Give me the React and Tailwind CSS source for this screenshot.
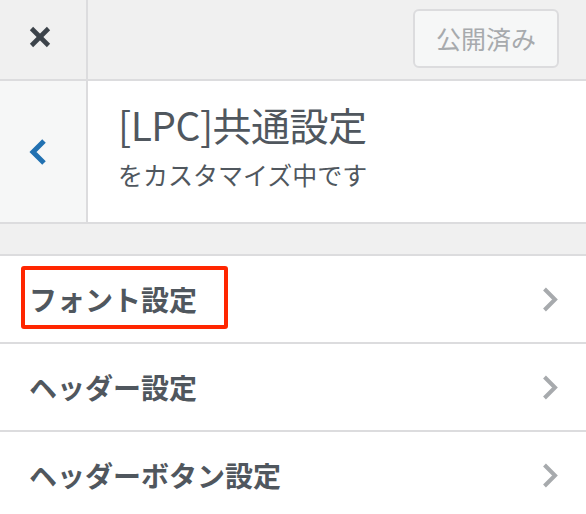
import React from 'react'

const font = { fontFamily: '"Noto Sans CJK JP", "Noto Sans", sans-serif' }

const ChevronRight = () => (
  <svg width="18" height="27" viewBox="0 0 18 27" fill="none">
    <polyline points="3.5,3 14,13.5 3.5,24" stroke="#a7aaad" strokeWidth="4" strokeLinejoin="miter" />
  </svg>
)

const sections = ['フォント設定', 'ヘッダー設定', 'ヘッダーボタン設定']

const App = () => {
  return (
    <div className="w-[586px] h-[514px] overflow-hidden bg-white text-[#50575e]" style={font}>
      {/* Top bar */}
      <div className="flex h-[81px] bg-[#f0f0f0] border-b-2 border-[#dcdcde]">
        <div className="w-[88px] border-r-2 border-[#dcdcde] pl-[28px] pt-[25px]">
          <svg width="24" height="24" viewBox="0 0 24 24" fill="none">
            <line x1="3.5" y1="3.5" x2="20.5" y2="20.5" stroke="#3c434a" strokeWidth="4.6" />
            <line x1="20.5" y1="3.5" x2="3.5" y2="20.5" stroke="#3c434a" strokeWidth="4.6" />
          </svg>
        </div>
        <div className="flex-1 flex items-center justify-end pr-[27px]">
          <button className="w-[146px] h-[59px] mt-[-2px] rounded-[6px] border-2 border-[#dcdcde] bg-[#f6f7f7] text-[#a7aaad] text-[25px] leading-none">
            公開済み
          </button>
        </div>
      </div>

      {/* Panel info */}
      <div className="flex h-[143px] border-b-2 border-[#dcdcde]">
        <div className="w-[88px] bg-[#f6f7f7] border-r-2 border-[#dcdcde] flex items-center pl-[28px]">
          <svg width="20" height="28" viewBox="0 0 20 28" fill="none">
            <polyline points="16,3 5,14 16,25" stroke="#2271b1" strokeWidth="5" strokeLinejoin="miter" />
          </svg>
        </div>
        <div className="flex-1 pl-[30px] pt-[18px]">
          <div className="text-[39px] leading-[50px] font-normal tracking-[-0.5px]">[LPC]共通設定</div>
          <div className="text-[25px] leading-[50px]">をカスタマイズ中です</div>
        </div>
      </div>

      {/* Gap */}
      <div className="h-[32px] bg-[#f0f0f0] border-b-2 border-[#dcdcde]" />

      {/* Section list */}
      <ul>
        {sections.map((title, i) => (
          <li key={title} className="relative flex items-center justify-between h-[88px] border-b-2 border-[#dcdcde] pl-[29px] pr-[27px]">
            <span className="text-[28px] font-bold leading-none">{title}</span>
            <ChevronRight />
            {i === 0 && (
              <div className="absolute left-[21px] top-[10px] w-[207px] h-[63px] border-[4px] border-[#ff2600] rounded-[3px]" />
            )}
          </li>
        ))}
      </ul>
    </div>
  )
}

export default App
